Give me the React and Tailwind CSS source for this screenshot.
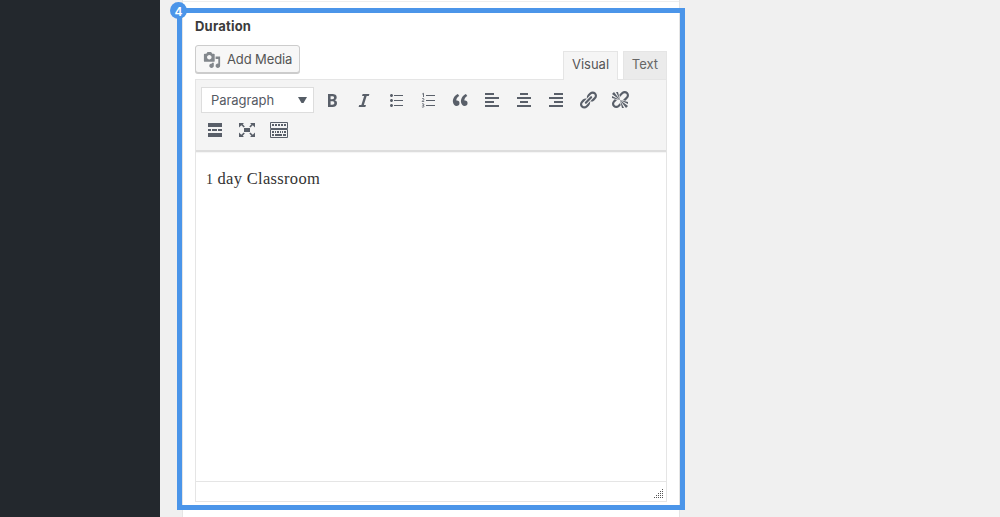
import React from "react";

const Icon = ({ children, size = 20, className = "text-[#595f69]" }) => (
  <svg width={size} height={size} viewBox="0 0 20 20" fill="currentColor" className={`shrink-0 ${className}`} aria-hidden="true">
    {children}
  </svg>
);

const paths = {
  bold: "M6 4v13h4.54c1.37 0 2.46-.33 3.26-1 .8-.66 1.2-1.58 1.2-2.77 0-.84-.17-1.51-.51-2.01s-.9-.85-1.67-1.03v-.09c.57-.1 1.02-.4 1.36-.9s.51-1.13.51-1.91c0-1.14-.39-1.98-1.17-2.5C12.75 4.26 11.5 4 9.78 4H6zm2.57 5.15V6.26h1.36c.73 0 1.27.11 1.61.32.34.22.51.58.51 1.07 0 .54-.16.92-.47 1.15s-.82.35-1.51.35h-1.5zm0 2.19h1.6c1.44 0 2.16.53 2.16 1.61 0 .6-.17 1.05-.51 1.34s-.86.43-1.57.43H8.57v-3.38z",
  italic: "M14.78 6h-2.13l-2.8 9h2.12l-.62 2H4.6l.62-2h2.14l2.8-9H8.03l.62-2h6.75z",
  list: "M5.5 7C4.67 7 4 6.33 4 5.5 4 4.68 4.67 4 5.5 4 6.32 4 7 4.68 7 5.5 7 6.33 6.32 7 5.5 7zM8 5h9v1H8V5zm-2.5 7c-.83 0-1.5-.67-1.5-1.5C4 9.68 4.67 9 5.5 9c.82 0 1.5.68 1.5 1.5 0 .83-.68 1.5-1.5 1.5zM8 10h9v1H8v-1zm-2.5 7c-.83 0-1.5-.67-1.5-1.5 0-.82.67-1.5 1.5-1.5.82 0 1.5.68 1.5 1.5 0 .83-.68 1.5-1.5 1.5zM8 15h9v1H8v-1z",
  quote: "M9.49 13.22c0-.74-.2-1.38-.61-1.9-.62-.78-1.83-.88-2.53-.72-.29-1.65 1.11-3.75 2.92-4.65L7.88 4c-2.73 1.3-5.42 4.28-4.96 8.05C3.21 14.43 4.59 16 6.54 16c.85 0 1.56-.25 2.12-.75s.83-1.18.83-2.03zm8.05 0c0-.74-.2-1.38-.61-1.9-.63-.78-1.83-.88-2.53-.72-.29-1.65 1.11-3.75 2.92-4.65L15.93 4c-2.73 1.3-5.41 4.28-4.95 8.05.29 2.38 1.66 3.95 3.61 3.95.85 0 1.56-.25 2.12-.75s.83-1.18.83-2.03z",
  link: "M17.74 2.76c1.68 1.69 1.68 4.41 0 6.1l-1.53 1.52c-1.12 1.12-2.7 1.47-4.14 1.09l2.62-2.61.76-.77.76-.76c.84-.84.84-2.2 0-3.04-.84-.85-2.2-.85-3.04 0l-.77.76-3.38 3.38c-.37-1.44-.02-3.02 1.1-4.14l1.52-1.53c1.69-1.68 4.42-1.68 6.1 0zM8.59 13.43l5.34-5.34c.42-.42.42-1.1 0-1.52-.44-.43-1.13-.39-1.53 0l-5.33 5.34c-.42.42-.42 1.1 0 1.52.44.43 1.13.39 1.52 0zm-.76 2.29l4.14-4.15c.38 1.44.03 3.02-1.09 4.14l-1.52 1.53c-1.69 1.68-4.41 1.68-6.1 0-1.68-1.68-1.68-4.42 0-6.1l1.53-1.52c1.12-1.12 2.7-1.47 4.14-1.1l-4.14 4.15c-.85.84-.85 2.2 0 3.05.84.84 2.2.84 3.04 0z",
  unlink: "M17.74 2.26c1.68 1.69 1.68 4.41 0 6.1l-1.53 1.52c-.32.33-.69.58-1.08.77L13 10l1.69-1.64.76-.77.76-.76c.84-.84.84-2.2 0-3.04-.84-.85-2.2-.85-3.04 0l-.77.76-.76.76L10 7l-.65-2.14c.19-.38.44-.75.77-1.07l1.52-1.53c1.69-1.68 4.42-1.68 6.1 0zM2 4l8 6-6-8zm4-2l4 8-2-8H6zM2 6l8 4-8-2V6zm7.36 7.69L10 13l.74 2.35-1.38 1.39c-1.69 1.68-4.41 1.68-6.1 0-1.68-1.68-1.68-4.42 0-6.1l1.39-1.38L7 10l-.69.64-1.52 1.53c-.85.84-.85 2.2 0 3.04.84.85 2.2.85 3.04 0zM18 16l-8-6 6 8zm-4 2l-4-8 2 8h2zm4-4l-8-4 8 2v2z",
  media: "M13 11V4c0-.55-.45-1-1-1h-1.67L9 1H5L3.67 3H2c-.55 0-1 .45-1 1v7c0 .55.45 1 1 1h10c.55 0 1-.45 1-1zM7 4.5c1.38 0 2.5 1.12 2.5 2.5S8.38 9.5 7 9.5 4.5 8.38 4.5 7 5.62 4.5 7 4.5zM14 6h5v10.5c0 1.38-1.12 2.5-2.5 2.5S14 17.88 14 16.5s1.12-2.5 2.5-2.5c.17 0 .34.02.5.05V9h-3V6zm-4 8.05V13h2v3.5c0 1.38-1.12 2.5-2.5 2.5S7 17.88 7 16.5 8.12 14 9.5 14c.17 0 .34.02.5.05z",
};

const alignments = {
  left: "M3 3h9v2H3zM3 7h14v2H3zM3 11h9v2H3zM3 15h14v2H3z",
  center: "M6 3h8v2H6zM3 7h14v2H3zM6 11h8v2H6zM3 15h14v2H3z",
  right: "M8 3h9v2H8zM3 7h14v2H3zM8 11h9v2H8zM3 15h14v2H3z",
};

const gripDots = [[8, 0], [6, 2], [8, 2], [4, 4], [6, 4], [8, 4], [2, 6], [4, 6], [6, 6], [8, 6], [0, 8], [2, 8], [4, 8], [6, 8], [8, 8]];

function Toolbar() {
  return (
    <div className="flex h-[72px] shrink-0 flex-col gap-1 border-b-2 border-[#dddddd] bg-[#f4f4f4] pl-[5px] pt-[7px] shadow-[0_1px_1px_#0000000a]">
      <div className="flex h-[26px] items-center">
        <div className="mr-2 flex h-[26px] w-[113px] items-center justify-between border border-[#dddddd] bg-white pl-[9px] pr-[6px] text-[13px] text-[#555a63]">
          <span className="pt-[2px] tracking-[-0.05px]">Paragraph</span>
          <svg width="9" height="6" viewBox="0 0 9 6" fill="#555d66"><path d="M0 0h9L5.5 6h-2z" /></svg>
        </div>
        <div className="flex gap-3">
          <Icon><path d={paths.bold} /></Icon>
          <Icon><path d={paths.italic} /></Icon>
          <Icon><path d={paths.list} /></Icon>
          <Icon>
            <path d="M8 5h9v1H8zM8 10h9v1H8zM8 15h9v1H8z" />
            <path d="M4.2 4.1L5.5 3.3V7M4 8.9c.7-.8 2-.5 1.9.4 0 .7-1 1.1-1.8 2.1H6.2M4 13.9c.7-.5 1.9-.3 1.8.6 0 .5-.5.8-1.1.8.8 0 1.3.3 1.3.9 0 1-1.3 1.2-2.1.6" fill="none" stroke="currentColor" strokeWidth=".9" />
          </Icon>
          <Icon><path d={paths.quote} /></Icon>
          <Icon><path d={alignments.left} /></Icon>
          <Icon><path d={alignments.center} /></Icon>
          <Icon><path d={alignments.right} /></Icon>
          <Icon><path d={paths.link} /></Icon>
          <Icon><path d={paths.unlink} /></Icon>
        </div>
      </div>
      <div className="flex h-[26px] items-center gap-3 pl-1">
        <Icon><path d="M3 3h14v4H3zM3 9h3v2H3zM7 9h5v2H7zM13 9h4v2h-4zM3 13h14v4H3z" /></Icon>
        <Icon>
          <path d="M7 8h6v4H7zM2 3h5L5.7 4.3l2.1 2.1-1.1 1.1-2.3-2.2L2 7.5zM18 3v4.5l-2.2-2.2-2.4 2.2-1.1-1.1 2.1-2.1L13 3zM2 17v-4.5l2.3 2.2 2.4-2.2 1.1 1.1-2.1 2.1L7 17zM18 17h-5l1.4-1.3-2.1-2.1 1.1-1.1 2.4 2.2 2.2-2.2z" />
        </Icon>
        <Icon>
          <path d="M1.5 2.5h17v6h-17zM1.5 9.5h17v8h-17z" fill="none" stroke="currentColor" />
          <path d="M3 4h2v2H3zM6 4h2v2H6zM9 4h2v2H9zM12 4h2v2h-2zM15 4h2v2h-2zM3 11h2v2H3zM6 11h1v2H6zM8 11h2v2H8zM11 11h1v2h-1zM13 11h1v2h-1zM15 11h2v2h-2zM3 14h2v2H3zM6 14h7v2H6zM14 14h3v2h-3z" />
        </Icon>
      </div>
    </div>
  );
}

export default function App() {
  return (
    <div className="relative flex h-[517px] w-[1000px] overflow-hidden bg-[#f0f0f0] font-['Inter',sans-serif] text-[#444444]">
      <aside className="w-[160px] shrink-0 bg-[#23282d]" />
      <main className="ml-[22px] w-[498px] border-x border-[#e5e5e5] bg-white pl-3 pr-3">
        <div className="-mx-3 h-[2px] border-b border-[#eeeeee]" />
        <h2 className="mt-[14px] h-5 text-[13px] font-bold leading-5 tracking-[0.2px] text-[#3b3b3b]">Duration</h2>
        <div className="mt-[9px] flex h-[34px] items-start justify-between">
          <button className="flex h-[28px] w-[105px] items-center gap-[6px] rounded-[3px] border border-[#cccccc] bg-[#f7f7f7] pl-[7px] text-[13px] text-[#555555] shadow-[0_1px_0_#cccccc]">
            <Icon size={18} className="mt-[2px] text-[#82878c]"><path d={paths.media} /></Icon>
            <span className="whitespace-nowrap pt-[2px] tracking-[-0.12px]">Add Media</span>
          </button>
          <div className="flex h-[35px] gap-[5px] pt-[6px] text-[13px]">
            <div className="z-10 h-[29px] w-[55px] border border-b-0 border-[#e5e5e5] bg-[#f5f5f5] pt-[2px] text-center leading-5 text-[#555555]">Visual</div>
            <div className="h-[28px] w-[44px] border border-b-0 border-[#e5e5e5] bg-[#ebebeb] pt-[2px] text-center leading-5 text-[#666666]">Text</div>
          </div>
        </div>
        <section className="flex h-[423px] w-[472px] flex-col border border-[#e5e5e5]">
          <Toolbar />
          <div className="h-[329px] pl-[10px] pt-[14px] font-['Liberation_Serif',serif] text-[16.5px] leading-[26px] text-[#333333]">
            <span className="text-[14px]">1</span><span className="tracking-[0.32px]"> day Classroom</span>
          </div>
          <footer className="flex flex-1 items-end justify-end border-t border-[#e5e5e5] pb-[3px] pr-[3px]">
            <svg width="9" height="9" viewBox="0 0 9 9" fill="#555555">
              {gripDots.map(([x, y]) => <rect key={`${x}-${y}`} x={x} y={y} width="1" height="1" />)}
            </svg>
          </footer>
        </section>
      </main>
      <div className="pointer-events-none absolute left-[177px] top-2 z-20 h-[502px] w-[508px] border-[5px] border-[#4b95e9]" />
      <div className="absolute left-[170px] top-[2px] z-30 flex h-[17px] w-[17px] items-center justify-center rounded-full bg-[#4b95e9] pt-[2px] text-[12px] font-semibold leading-none text-white">4</div>
    </div>
  );
}
